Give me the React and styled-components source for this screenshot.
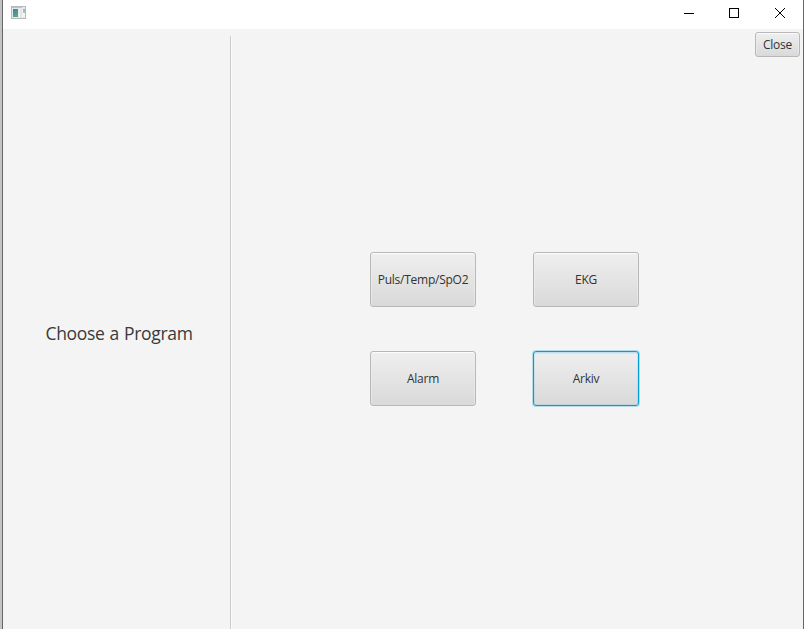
import React from "react";
import styled, { createGlobalStyle, css } from "styled-components";

const GlobalStyle = createGlobalStyle`
  * { box-sizing: border-box; }
  body {
    margin: 0;
    overflow: hidden;
    background: #c3c3c3;
    font-family: "Open Sans", "Noto Sans", sans-serif;
  }
`;

const Window = styled.div`
  display: flex;
  flex-direction: column;
  width: 802px;
  height: 629px;
  margin-left: 2px;
  border: solid #666;
  border-width: 0 1px;
  background: #f4f4f4;
`;

const TitleBar = styled.header`
  display: flex;
  align-items: flex-start;
  justify-content: space-between;
  flex: 0 0 29px;
  padding: 6px 17px 0 8px;
  background: #fff;
`;

const WindowControls = styled.div`
  display: grid;
  grid-template-columns: 45px 46px 12px;
  padding-top: 1px;
`;

const Control = styled.svg`
  display: block;
  width: 12px;
  height: 12px;
  fill: none;
  stroke: #000;
`;

const AppIcon = styled.svg`
  display: block;
  width: 16px;
  height: 14px;
`;

const Content = styled.main`
  display: flex;
  flex: 1;
  min-height: 0;
`;

const Sidebar = styled.aside`
  display: flex;
  justify-content: center;
  width: 227px;
  padding: 292px 0 0 5px;
`;

const Heading = styled.h1`
  margin: 0;
  color: #3a3a3a;
  font-size: 17.5px;
  font-weight: 400;
  line-height: 24px;
  letter-spacing: -0.32px;
  word-spacing: 0.8px;
  white-space: nowrap;
`;

const Separator = styled.div`
  width: 2px;
  margin-top: 7px;
  border-left: 1px solid #cacaca;
  background: #fbfbfb;
`;

const Workspace = styled.section`
  display: flex;
  flex: 1;
  flex-direction: column;
  padding-top: 3px;
`;

const Button = styled.button`
  display: flex;
  align-items: center;
  justify-content: center;
  padding: 1px 0 0;
  border: 1px solid #b8b8b8;
  border-radius: 3px;
  background: linear-gradient(#efefef, #d9d9d9);
  box-shadow: inset 0 1px #fbfbfb, inset 1px 0 #eeeeee88, inset -1px 0 #eeeeee88;
  color: #333;
  font: 400 12px/16px "Open Sans", "Noto Sans", sans-serif;
  letter-spacing: -0.24px;
  white-space: nowrap;
  outline: none;
  ${({ $focused }) => $focused && css`
    border-color: #039ed3;
    box-shadow: 0 0 0 1px #039ed345, inset 0 0 0 1px #039ed31c, inset 0 2px #d5e7f2;
  `}
`;

const CloseButton = styled(Button)`
  align-self: flex-end;
  width: 45px;
  height: 25px;
  margin-right: 3px;
`;

const ProgramGrid = styled.div`
  display: grid;
  grid-template-columns: repeat(2, 106px);
  grid-auto-rows: 55px;
  gap: 44px 57px;
  margin: 195px 0 0 138px;
`;

const programs = [
  { name: "Puls/Temp/SpO2" },
  { name: "EKG" },
  { name: "Alarm" },
  { name: "Arkiv", focused: true },
];

export default function App() {
  return (
    <>
      <GlobalStyle />
      <Window>
        <TitleBar>
          <AppIcon viewBox="0 0 16 14" shapeRendering="crispEdges">
            <defs>
              <linearGradient id="screen" x2="0.3" y2="1" gradientUnits="objectBoundingBox">
                <stop stopColor="#477ca5" />
                <stop offset="1" stopColor="#5aa77c" />
              </linearGradient>
            </defs>
            <path fill="#b4b9bc" d="M0 0h15v13H0z" />
            <path fill="#e6eaec" d="M1 1h13v11H1z" />
            <path fill="#b5c3cd" d="M1 1h10v1H1z" />
            <path fill="url(#screen)" d="M2 3h5v8H2z" />
            <path fill="#f4f4f2" d="M8 3h6v8H8z" />
            <path fill="#e3e5e4" d="M9 3h2v8H9z" />
            <path fill="#8db7c5" d="M12 3h2v2h-2z" />
            <path fill="#a7cba6" d="M12 5h2v2h-2z" />
          </AppIcon>
          <WindowControls>
            <Control viewBox="0 0 12 12" shapeRendering="crispEdges">
              <path d="M1 6.5h10" />
            </Control>
            <Control viewBox="0 0 12 12" shapeRendering="crispEdges">
              <path d="M1.5 1.5h9v9h-9z" />
            </Control>
            <Control viewBox="0 0 12 12">
              <path strokeWidth="1" d="m1 1 10 10M11 1 1 11" />
            </Control>
          </WindowControls>
        </TitleBar>
        <Content>
          <Sidebar>
            <Heading>Choose a Program</Heading>
          </Sidebar>
          <Separator />
          <Workspace>
            <CloseButton>Close</CloseButton>
            <ProgramGrid>
              {programs.map(({ name, focused }) => (
                <Button key={name} $focused={focused}>{name}</Button>
              ))}
            </ProgramGrid>
          </Workspace>
        </Content>
      </Window>
    </>
  );
}
